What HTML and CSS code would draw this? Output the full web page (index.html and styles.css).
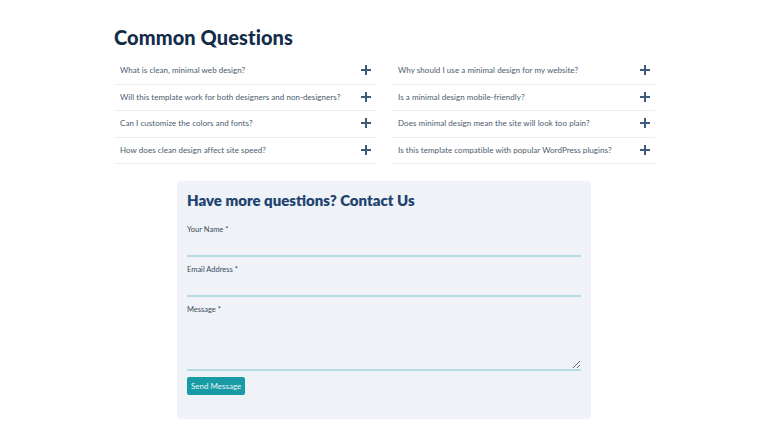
FILE: index.html
```html
<!DOCTYPE html>
<html>
<head>
<meta charset="utf-8">
<link rel="stylesheet" href="styles.css">
</head>
<body>
<main class="page">
  <h1 class="title">Common Questions</h1>
  <div class="faq">
    <div class="faq-col">
      <div class="faq-item"><span>What is clean, minimal web design?</span><svg class="plus" viewBox="0 0 10 10"><path d="M5 0V10M0 5H10"/></svg></div>
      <div class="faq-item"><span>Will this template work for both designers and non-designers?</span><svg class="plus" viewBox="0 0 10 10"><path d="M5 0V10M0 5H10"/></svg></div>
      <div class="faq-item"><span>Can I customize the colors and fonts?</span><svg class="plus" viewBox="0 0 10 10"><path d="M5 0V10M0 5H10"/></svg></div>
      <div class="faq-item"><span>How does clean design affect site speed?</span><svg class="plus" viewBox="0 0 10 10"><path d="M5 0V10M0 5H10"/></svg></div>
    </div>
    <div class="faq-col">
      <div class="faq-item"><span>Why should I use a minimal design for my website?</span><svg class="plus" viewBox="0 0 10 10"><path d="M5 0V10M0 5H10"/></svg></div>
      <div class="faq-item"><span>Is a minimal design mobile-friendly?</span><svg class="plus" viewBox="0 0 10 10"><path d="M5 0V10M0 5H10"/></svg></div>
      <div class="faq-item"><span>Does minimal design mean the site will look too plain?</span><svg class="plus" viewBox="0 0 10 10"><path d="M5 0V10M0 5H10"/></svg></div>
      <div class="faq-item"><span>Is this template compatible with popular WordPress plugins?</span><svg class="plus" viewBox="0 0 10 10"><path d="M5 0V10M0 5H10"/></svg></div>
    </div>
  </div>
  <section class="contact">
    <h2 class="contact-title">Have more questions? Contact Us</h2>
    <form class="form">
      <label class="field">
        <span class="label">Your Name *</span>
        <input class="input" type="text">
      </label>
      <label class="field">
        <span class="label">Email Address *</span>
        <input class="input" type="email">
      </label>
      <label class="field">
        <span class="label">Message *</span>
        <textarea class="textarea"></textarea>
      </label>
      <button class="btn" type="button">Send Message</button>
    </form>
  </section>
</main>
</body>
</html>
```

FILE: styles.css
```css
* { box-sizing: border-box; }
html, body { margin: 0; padding: 0; background: #ffffff; }
body { font-family: "Lato", "Open Sans", sans-serif; color: #4a5a6b; }
.page { width: 541px; margin: 0 0 0 114px; padding-top: 25px; }
.title {
  margin: 0 0 9px 0;
  font-family: "Lato", sans-serif;
  font-weight: 900;
  font-size: 20px;
  line-height: 24px;
  color: #132c4a;
  letter-spacing: 0.1px;
}
.faq { display: grid; grid-template-columns: 262px 263px; column-gap: 16px; }
.faq-col { display: flex; flex-direction: column; }
.faq-item {
  height: 26.5px;
  display: flex;
  align-items: center;
  justify-content: space-between;
  padding: 0 5px 1px 6px;
  border-bottom: 1px solid #edf0f3;
  font-size: 8px;
  color: #4b5b6d;
  letter-spacing: 0.05px;
}
.plus { width: 10px; height: 10px; flex: none; }
.plus path { stroke: #3e5b7a; stroke-width: 2; fill: none; }
.contact {
  width: 414px;
  margin: 17px 0 0 63px;
  background: #eff3f7;
  border-radius: 4px;
  padding: 10px 10px 24px 10px;
}
.contact-title {
  margin: 0 0 15px 0;
  font-family: "Lato", sans-serif;
  font-weight: 800;
  font-size: 15px;
  line-height: 19px;
  color: #1e4470;
}
.form { display: flex; flex-direction: column; }
.field { display: flex; flex-direction: column; margin-bottom: 8px; }
.label { font-size: 7.5px; line-height: 10px; color: #3b4b5c; }
.input {
  height: 22px;
  border: none;
  border-bottom: 2px solid #b6dbe3;
  background: transparent;
  outline: none;
}
.textarea {
  height: 56px;
  border: none;
  border-bottom: 2px solid #b6dbe3;
  background: transparent;
  outline: none;
  resize: vertical;
  margin-top: 0;
}
.btn {
  align-self: flex-start;
  margin-top: -2px;
  height: 18px;
  padding: 0 4px;
  border: none;
  border-radius: 2px;
  background: #199ba6;
  color: #e8f6f7;
  font-family: "Lato", sans-serif;
  font-size: 8px;
}
```
